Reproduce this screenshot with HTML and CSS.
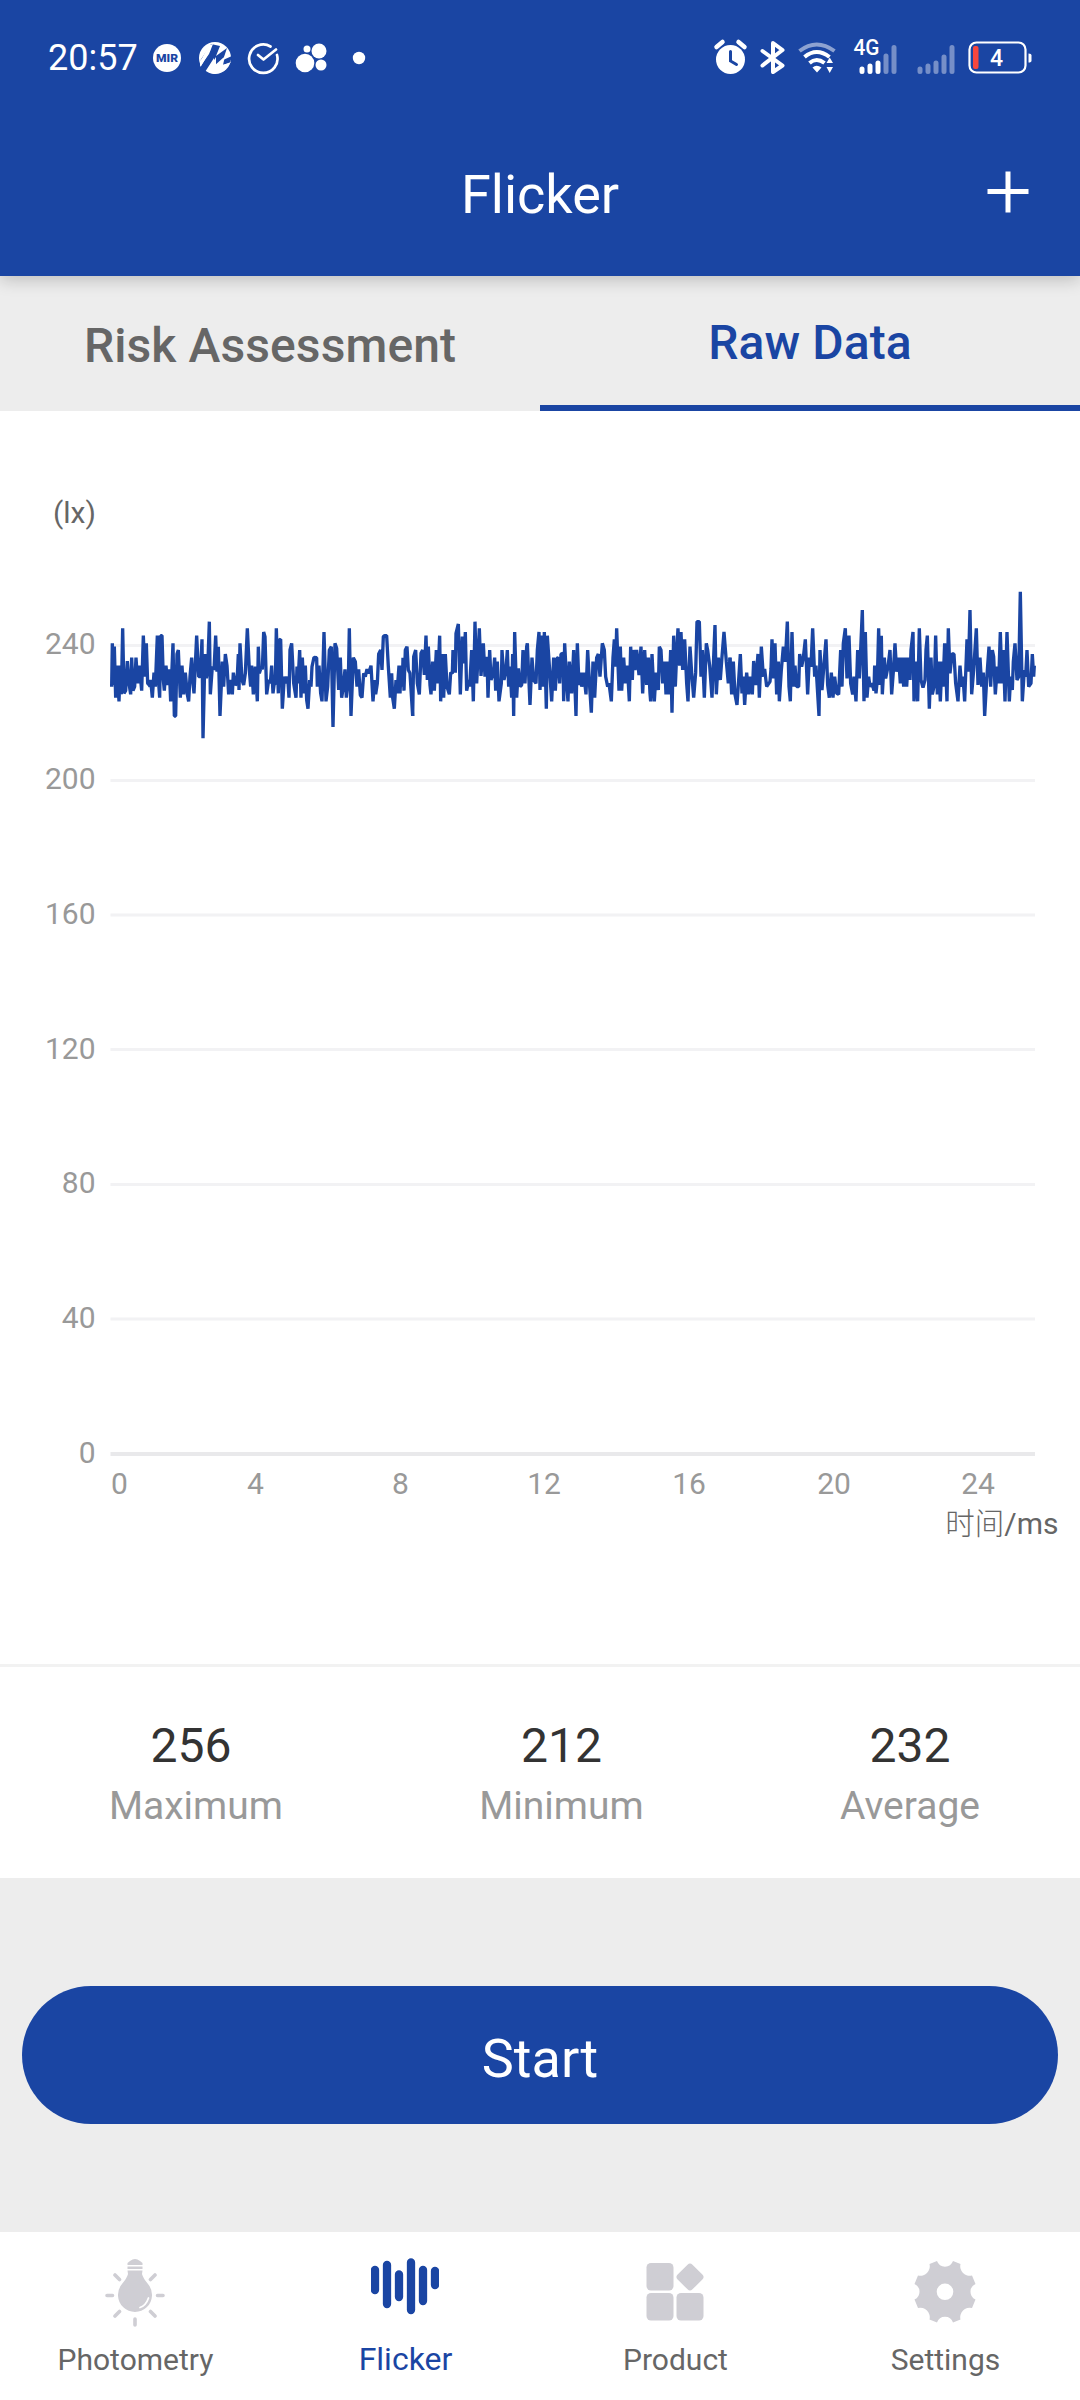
FILE: index.html
```html
<!DOCTYPE html>
<html lang="en">
<head>
<meta charset="utf-8">
<title>Flicker</title>
<link rel="stylesheet" href="styles.css">
</head>
<body>
<header class="header">
  <div class="status">
    <span class="clock">20:57</span>
    <svg class="status-left" width="220" height="40" viewBox="0 0 220 40" fill="#fff">
      <circle cx="15" cy="20" r="14"/>
      <text x="15" y="23.6" class="mir" textLength="22" lengthAdjust="spacingAndGlyphs">MIR</text>
      <circle cx="63" cy="20" r="16"/>
      <path d="M48 23 L59 6 L68 8 L64 18 L75 10 L71 22 L80 18 L78 25 L70 27 L71 20 L62 28 L62 20 L53 34 L48 30 L55 18 L59 11 Z" fill="#1a45a3"/>
      <path d="M55 33 L64 19 L64 28 L73 18 L71 27 L79 24 L72 33 L62 36 Z M48 24 L57 7 L61 6 L57 16 L48 29 Z"/>
      <path d="M118.500 8.500 A14.200 14.200 0 1 0 125 17 M106 17 L111.500 21.500 L124 11.500" fill="none" stroke="#fff" stroke-width="2.700" stroke-linecap="round" stroke-linejoin="round"/>
      <circle cx="155" cy="11" r="3.500"/><circle cx="167" cy="13" r="7.500"/><circle cx="153" cy="25" r="9.300"/><circle cx="169" cy="27" r="5.500"/>
      <circle cx="207" cy="20" r="6.200"/>
    </svg>
    <svg class="status-right" width="320" height="56" viewBox="0 -8 320 56" fill="#fff">
      <g transform="translate(1.500 0)">
        <circle cx="16" cy="21.500" r="14.500"/>
        <path d="M2 9 L8 4 M30 9 L24 4" stroke="#fff" stroke-width="4.500" stroke-linecap="round"/>
        <path d="M16 13.500 V23 L22 26.500" fill="none" stroke="#1a45a3" stroke-width="3" stroke-linecap="round"/>
        <path d="M48 13 L68 27.500 L58.500 34 V5 L68 12 L48 27.500" fill="none" stroke="#fff" stroke-width="4" stroke-linejoin="round" stroke-linecap="round"/>
        <g fill="none" stroke="#fff" stroke-width="4">
          <path d="M85 13 Q102 0 120 13" opacity=".5"/>
          <path d="M90 19 Q102 9 115 19"/><path d="M95 25 Q102 19 110 25"/>
        </g>
        <path d="M98 29.500 Q102 26 107 29.500 L102.500 34.500 Z M112 25 L115.200 19.500 L118.500 25 Z M112 29 H118.500 L115.200 35 Z"/>
        <text x="139" y="17" class="net" textLength="26" lengthAdjust="spacingAndGlyphs">4G</text>
        <g stroke="#fff" stroke-width="5" stroke-linecap="round">
          <path d="M147.500 31 V33.500 M155.500 28 V33.500 M163.500 25 V33.500"/>
          <path d="M171.500 18 V33.500 M179.500 9.500 V33.500 M205.500 31 V33.500 M213.500 28 V33.500 M221.500 25 V33.500 M229.500 19 V33.500 M237.500 9.500 V33.500" opacity=".4"/>
        </g>
      </g>
      <rect x="256.500" y="4.500" width="56" height="30" rx="7" fill="none" stroke="#fff" stroke-width="2.200"/>
      <rect x="260" y="8" width="5.500" height="23" rx="2" fill="#f8463d"/>
      <path d="M315.500 15.500 Q318.500 15.500 318.500 17.500 V22.500 Q318.500 24.500 315.500 24.500 Z"/>
      <text x="283.500" y="27.800" class="level">4</text>
    </svg>
  </div>
  <div class="titlebar">
    <h1 class="title">Flicker</h1>
    <svg class="add" width="42" height="42" viewBox="0 0 42 42"><path d="M21 0.500 V41.500 M0.500 20.500 H41.500" stroke="#fff" stroke-width="5"/></svg>
  </div>
</header>
<nav class="tabs">
  <div class="tab">Risk Assessment</div>
  <div class="tab tab-active">Raw Data</div>
</nav>
<main class="chart">
  <svg width="1080" height="1253" viewBox="0 411 1080 1253">
    <path d="M110.500 645.500 H1035 M110.500 780.500 H1035 M110.500 915 H1035 M110.500 1049.500 H1035 M110.500 1184.500 H1035 M110.500 1319 H1035" stroke="#f2f2f4" stroke-width="3"/>
    <rect x="110.500" y="1452" width="924.500" height="4" fill="#e9e9eb"/>
    <g class="axis axis-y">
      <text x="95.500" y="654">240</text><text x="95.500" y="789">200</text><text x="95.500" y="924">160</text><text x="95.500" y="1058.500">120</text><text x="95.500" y="1193">80</text><text x="95.500" y="1328">40</text><text x="95.500" y="1463">0</text>
    </g>
    <g class="axis axis-x">
      <text x="119.500" y="1493.700">0</text><text x="255.500" y="1493.700">4</text><text x="400.500" y="1493.700">8</text><text x="544" y="1493.700">12</text><text x="689" y="1493.700">16</text><text x="834" y="1493.700">20</text><text x="978" y="1493.700">24</text>
    </g>
    <text x="53" y="523" class="unit">(lx)</text>
    <text x="1058.500" y="1534" class="unit unit-x"><tspan class="cjk">时间</tspan>/ms</text>
    <g class="wave" transform="translate(90 570) scale(.33333)">
      <polyline points="65,350 67,220 70,345 73,230 77,383 81,287 87,394 91,287 94,373 98,175 102,370 107,362 112,273 117,340 122,373 125,263 129,362 134,350 138,263 143,340 148,287 155,362 160,197 165,320 169,220 173,340 178,345 180,350 182,330 187,383 192,308 196,350 202,197 206,340 209,383 212,197 216,197 220,330 223,362 228,287 233,345 238,298 242,394 249,220 253,438 257,438 261,252 265,240 271,383 276,287 281,373 286,308 292,373 296,394 300,320 305,263 309,340 312,370 320,197 326,320 331,320 336,208 339,505 345,252 349,325 353,300 358,155 361,373 367,290 372,300 377,197 381,305 385,230 390,438 397,275 401,350 406,252 411,287 416,373 421,330 427,373 430,308 436,345 441,340 445,252 447,360 450,220 456,330 461,345 466,310 472,175 478,300 482,350 485,287 490,373 496,290 502,394 505,230 508,310 514,290 517,298 521,186 525,200 530,373 536,330 541,340 545,287 549,370 552,345 556,340 559,175 565,370 568,210 572,208 577,416 583,320 589,340 593,320 597,383 600,240 605,220 611,340 618,383 621,290 624,340 629,240 633,383 637,263 642,370 646,287 650,390 654,416 659,330 663,350 666,290 672,262 680,263 682,350 687,287 692,370 696,394 702,186 708,394 713,350 718,240 724,230 729,471 735,220 740,235 746,360 751,263 755,383 760,350 765,298 769,383 775,330 778,175 783,438 790,263 796,275 801,350 806,298 811,375 816,383 821,310 826,320 831,297 836,310 843,287 849,394 854,330 857,373 862,340 866,252 872,240 876,300 880,200 884,197 890,197 895,290 901,383 905,310 908,383 913,416 918,330 921,370 927,287 930,370 934,287 937,350 939,263 942,362 946,240 951,230 955,300 960,310 968,438"/>
      <polyline transform="translate(960 0)" points="8,438 11,260 17,240 22,340 28,373 33,250 38,240 43,315 48,197 52,330 55,230 60,345 63,373 68,275 73,362 79,240 83,340 89,197 92,394 97,252 101,383 106,252 111,350 118,373 122,308 127,310 129,240 136,308 138,190 145,162 151,373 157,200 162,280 166,186 170,362 177,330 179,350 185,240 190,394 195,155 200,340 205,240 208,175 213,318 220,220 225,320 231,260 234,383 239,240 243,330 250,310 254,263 257,362 262,275 267,394 274,340 276,240 282,330 288,300 292,240 296,350 300,290 305,383 308,252 311,438 314,186 320,383 325,295 330,350 335,345 339,240 345,340 350,230 352,220 360,405 366,263 371,330 378,340 382,240 387,186 390,360 396,197 400,350 403,186 409,416 412,197 418,287 425,394 431,263 436,362 441,265 445,263 449,340 453,252 459,250 461,394 464,220 470,340 474,394 478,275 485,370 491,240 498,438 502,220 507,345 511,308 515,350 521,308 528,373 533,240 539,350 544,428 549,275 554,383 560,263 565,252 570,320 577,220 583,240 587,320 593,350 597,340 604,394 609,263 613,208 617,290 620,175 627,362 631,230 635,362 641,263 646,340 652,287 658,394 662,230 667,330 670,240 675,300 680,240 687,315 693,230 698,370 704,240 710,345 715,263 720,370 722,394 726,252 733,394 738,308 745,360 748,230 753,240 758,340 764,275 768,373 772,275 777,373 782,240 786,428 791,197 796,350 800,252 804,175 809,287 813,186 818,300 824,208 830,340 834,394 840,230 845,308 851,383 857,308 861,155 868,155 873,320 877,240 883,383 889,220 893,240 899,287 906,383 911,263 915,165 919,373 925,263 931,330 936,260 942,186 949,275 955,340 960,263"/>
      <polyline transform="translate(1920 0)" points="0,263 5,373 10,275 15,373 21,405 26,330 31,252 36,370 40,320 44,405 50,308 56,373 61,320 67,373 71,273 77,345 84,252 88,383 94,230 100,320 104,297 110,350 120,335 123,297 126,208 131,325 135,220 140,373 145,275 148,394 154,300 160,230 166,275 172,155 177,350 181,394 186,186 191,350 195,287 200,350 206,350 209,252 215,290 220,263 226,208 233,373 238,263 243,290 248,175 254,320 258,287 267,438 270,240 276,360 283,270 288,208 293,345 298,383 304,308 309,383 314,320 320,370 326,373 332,240 336,350 340,220 346,175 351,325 357,197 362,340 368,373 372,320 378,394 383,240 388,325 392,240 397,120 402,394 406,186 411,383 416,320 420,350 426,340 432,362 434,287 438,370 442,330 446,175 450,345 454,197 457,373 463,263 467,325 474,290 480,240 485,373 490,305 495,220 500,305 506,263 511,340 516,263 521,350 526,263 530,350 535,263 540,330 543,240 549,186 552,394 558,275 563,394 568,175 573,330 579,353 585,330 588,240 592,197 598,416 603,263 607,373 613,345 617,197 622,373 626,275 631,394 636,275 639,350 644,220 651,394 655,175 660,310 666,252 672,252 677,340 684,394 690,287 695,350 699,320 704,394 711,208 715,305 720,120 725,373 731,300 739,175 744,345 750,263 755,350 760,308 764,438 770,330 777,230 782,350 787,240 791,260 796,373 802,290 806,340 811,186 816,340 820,240 825,394 831,186 838,394 842,320 847,360 850,275 855,220 861,330 866,320 871,65 877,394 883,300 887,320 891,240 896,350 903,340 907,252 911,320 913,287"/>
    </g>
  </svg>
</main>
<section class="stats">
  <div class="stat"><span class="value value-max">256</span><span class="label">Maximum</span></div>
  <div class="stat"><span class="value">212</span><span class="label">Minimum</span></div>
  <div class="stat"><span class="value">232</span><span class="label">Average</span></div>
</section>
<section class="action"><button class="start">Start</button></section>
<footer class="nav">
  <div class="nav-item">
    <svg width="68" height="74" viewBox="0 0 68 74" fill="#cfced4">
      <path d="M29 3 Q34 -1 39 3 L41.500 5 V7 H26.500 V5 Z M26.500 8.500 H41.500 V11 H26.500 Z M26.500 12.500 H41.500 L41 16 Q42 20 47 26 A17 17 0 1 1 21 26 Q26 20 27 16 Z"/>
      <path d="M47.500 40 Q45 47.500 39 49.500" fill="none" stroke="#fff" stroke-width="1.800" stroke-linecap="round"/>
      <path d="M6 37.500 H11.500 M56.500 37.500 H62 M14 17 L18.500 21.500 M54 17 L49.500 21.500 M14 58 L18.500 53.500 M54 58 L49.500 53.500 M34 61 V67" stroke="#cfced4" stroke-width="3.600" stroke-linecap="round"/>
    </svg>
    <span>Photometry</span>
  </div>
  <div class="nav-item nav-active">
    <svg width="68" height="74" viewBox="0 0 68 74"><path d="M4 12 V32 M16 7 V46 M28 16.500 V39 M40 4.500 V52 M52 12 V43 M64 13 V27" stroke="#1a45a3" stroke-width="8.300" stroke-linecap="round"/></svg>
    <span>Flicker</span>
  </div>
  <div class="nav-item">
    <svg width="68" height="74" viewBox="0 0 68 74" fill="#cfced4">
      <rect x="5.500" y="5" width="27" height="27.500" rx="4.500"/><rect x="5.500" y="35" width="27" height="27.500" rx="4.500"/><rect x="35.500" y="35" width="27" height="27.500" rx="4.500"/><rect x="38.500" y="8.500" width="21" height="21" rx="3.500" transform="rotate(45 49 19)"/>
    </svg>
    <span>Product</span>
  </div>
  <div class="nav-item">
    <svg width="68" height="74" viewBox="0 0 68 74" fill="#cfced4" fill-rule="evenodd">
      <path d="M26 3 A8.500 8.500 0 0 0 42 3 L49.500 6 A9.500 9.500 0 0 0 61 17.500 L64.500 26 A8.500 8.500 0 0 0 64.500 41.500 L61 50 A9.500 9.500 0 0 0 49.500 61.500 L42 64.500 A8.500 8.500 0 0 0 26 64.500 L18.500 61.500 A9.500 9.500 0 0 0 7 50 L3.500 41.500 A8.500 8.500 0 0 0 3.500 26 L7 17.500 A9.500 9.500 0 0 0 18.500 6 Z M34 25.500 A8.300 8.300 0 1 0 34 42.100 A8.300 8.300 0 1 0 34 25.500 Z"/>
    </svg>
    <span>Settings</span>
  </div>
</footer>
</body>
</html>
```
FILE: styles.css
```css
* { box-sizing: border-box; }
body {
  margin: 0;
  width: 1080px;
  height: 2400px;
  display: flex;
  flex-direction: column;
  overflow: hidden;
  background: #fff;
  font-family: Roboto, "Noto Sans CJK SC", sans-serif;
}
svg { display: block; flex: none; }
.header {
  height: 276px;
  background: #1a45a3;
  color: #fff;
  box-shadow: 0 4px 16px rgba(0, 0, 0, .2);
  position: relative;
}
.status {
  height: 116px;
  padding: 0 48px;
  display: flex;
  align-items: center;
}
.clock { font-size: 36px; width: 90px; white-space: nowrap; }
.status-left { margin-left: 14px; }
.status-right { margin-left: auto; margin-right: -1px; }
.mir { font: 900 10px Roboto, sans-serif; fill: #1a45a3; text-anchor: middle; }
.net { font: 500 22px Roboto, sans-serif; }
.level { font: 500 23px Roboto, sans-serif; text-anchor: middle; }
.titlebar {
  height: 160px;
  padding: 0 51px 0 93px;
  display: flex;
  align-items: center;
}
.title {
  flex: 1;
  margin: 0;
  text-align: center;
  font-size: 54px;
  font-weight: 400;
  line-height: 64px;
  padding-bottom: 2px;
}
.add { margin-bottom: 8px; }
.tabs { height: 135px; display: flex; background: #ededed; }
.tab {
  flex: 1;
  display: flex;
  align-items: center;
  justify-content: center;
  padding-top: 4px;
  font-size: 48px;
  font-weight: 500;
  letter-spacing: .1px;
  color: #666;
}
.tab-active { color: #1a45a3; border-bottom: 6px solid #1a45a3; }
.chart { height: 1253px; }
.axis { font-size: 30px; fill: #999; }
.axis-y { text-anchor: end; }
.axis-x { text-anchor: middle; }
.unit { font-size: 30px; fill: #666; }
.unit-x { text-anchor: end; }
.cjk { font-size: 29.5px; font-weight: 300; }
.wave { fill: none; stroke: #1a45a3; stroke-width: 10; stroke-linejoin: bevel; }
.stats {
  height: 214px;
  border-top: 3px solid #f2f2f2;
  padding: 51px 100px 0 109px;
  display: flex;
  justify-content: space-between;
}
.stat { display: flex; flex-direction: column; align-items: center; }
.value { font-size: 48px; line-height: 56px; color: #333; }
.value-max { margin-right: 10px; }
.label { font-size: 39px; line-height: 46px; margin-top: 9px; color: #999; }
.action {
  height: 354px;
  background: #ededed;
  padding: 0 22px;
  display: flex;
  align-items: center;
}
.start {
  width: 100%;
  height: 138px;
  border: 0;
  border-radius: 69px;
  background: #1a45a3;
  color: #fff;
  font: 400 54px Roboto, sans-serif;
  padding: 6px 0 0;
}
.nav { height: 168px; display: flex; background: #fff; }
.nav-item {
  flex: 1;
  padding-top: 26px;
  display: flex;
  flex-direction: column;
  align-items: center;
  font-size: 30px;
  line-height: 36px;
  color: #666;
}
.nav-item span { margin-top: 10px; padding-left: 1px; }
.nav-active { color: #1a45a3; font-size: 32px; }
.nav-active span { margin-top: 9px; }
```
